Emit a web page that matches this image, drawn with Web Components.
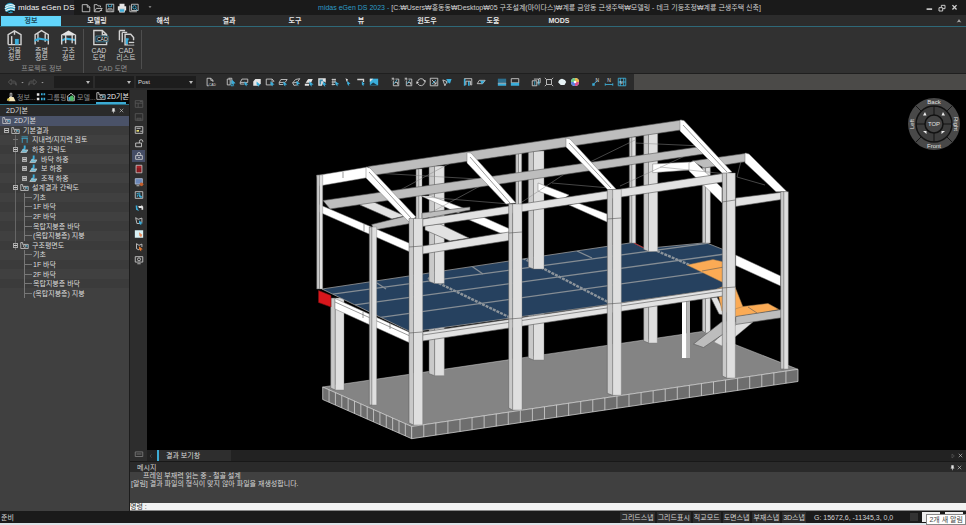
<!DOCTYPE html>
<html lang="ko">
<head>
<meta charset="utf-8">
<title>midas eGen DS 2023</title>
<style>
  html, body { margin: 0; height: 100%; background: #000; }
  body { font: 7px/9px "Liberation Sans", "Noto Sans CJK KR", sans-serif; color: #d4d4d4; }
</style>
</head>
<body>
<ds-app></ds-app>

<script>
{
  const BASE = `
    * { box-sizing: border-box; }
    button { font: inherit; color: inherit; background: none; border: 0; padding: 0; margin: 0; }
    ds-icon { flex: none; }
  `;

  class DsElement extends HTMLElement {
    constructor() {
      super();
      this.attachShadow({ mode: "open" });
    }

    attr(name, defaultValue) {
      return this.getAttribute(name) || defaultValue;
    }

    connectedCallback() {
      this.shadowRoot.innerHTML = `<style>${BASE}${this.styles}</style>${this.template}`;
    }
  }

  // w = white strokes, c = cyan strokes, cf = cyan fill, wf = white fill
  const ICONS = {
    logo: `<circle cx="6" cy="6" r="5.2" fill="#2a9fc4"/><path d="M1.2 4.5Q6 1 11 4M.8 7Q6 3 11.2 6M1.5 9Q6 5.5 10.8 8.2" stroke="#e8f4f8" stroke-width="1.2" fill="none"/><path d="M3 10.6Q7 7.5 10 9.6" stroke="#111" fill="none"/>`,
    new: `<path class="w" d="M1.5 2H7.5L10.5 5V10.5H1.5ZM7.5 2V5H10.5"/>`,
    open: `<path class="w" d="M9 5V3.5H6L5 2H1.5V10.5H8L11 6.5H4L2 10"/><path class="w" d="M8 9H11"/>`,
    save: `<path class="w" d="M1.5 1.5H10.5V10.5H1.5Z"/><path class="c" d="M4 1.5V4.5H8V1.5"/><path class="w" d="M3.5 10.5V7H8.5V10.5M5 8.5H7"/>`,
    print: `<path class="wf" d="M3 1H9V4H3ZM1 4H11V9H1Z"/><path class="cf" d="M3 7H9V11H3Z"/><path class="w" d="M3 7H9V11H3Z"/>`,
    preview: `<path class="w" d="M1 3V10.5H9.5M3 1.5H11V9H3Z"/><circle class="c" cx="6.5" cy="5.2" r="2"/><path class="c" d="M8 6.5L10 9"/>`,
    building: `<path class="w" d="M1.5 11V4L6 1.3L10.6 4V11H1.5M1.5 4V11M6 1.3V4"/><path class="cf" d="M6.3 7H9V11H6.3Z"/><path class="w" d="M4 5V11"/>`,
    floor: `<path class="w" d="M1.5 11V4L6 1.2L10.8 4V11M3.5 3V9M8.6 3.4V9"/><path class="cf" d="M1 7.6L4 6L11 7.2V8.4L4.5 7.6L1 9Z"/>`,
    struct: `<path class="wf" d="M.8 4L6 1L11.3 4L9 4.6H2.6Z"/><path class="cf" d="M1 7.5L4 6L11 7V8.5L4 7.5L1 9Z"/><path class="w" d="M1.2 11V4M4 10V4M8.6 10V4M10.9 11V4"/>`,
    cad: `<path class="w" d="M2 1H8L11 4V11H2ZM8 1V4H11"/><path d="M3.5 5H12V9H3.5Z" fill="#111" stroke="#5ac" stroke-width=".5"/><text x="4.2" y="8.4" font-size="3.6" fill="#eee">CAD</text>`,
    cadlist: `<path class="w" d="M1 1H5M1 1V8M3 2.4H6.5M3 2.4V9.4M5 3.7H9L11 6V11.2H5Z"/><path class="cf" d="M5.5 6.5H7.5V10.7H5.5Z"/><path d="M7 8H12V11H7Z" fill="#222"/><path class="w" d="M7.6 9.5H11.5"/>`,
    undo: `<path class="g" d="M4.5 2.5L1.5 5.5L4.5 8.5V6.5H8Q10 6.5 10 9M4.5 2.5V4.5H8Q10.5 5 10 9"/>`,
    redo: `<path class="g" d="M7.5 2.5L10.5 5.5L7.5 8.5V6.5H4Q2 6.5 2 9M7.5 2.5V4.5H4Q1.5 5 2 9"/>`,
    doc: `<path class="w" d="M2.5 10.5V1.5H7L9.5 4V6M7 1.5V4H9.5M2.5 10.5H4.5"/><text x="4.6" y="11" font-size="4" fill="#ddd">CAD</text>`,
    selbox: `<path class="w" d="M1.5 2.5H5V9.5H1.5ZM3 1.5H7V8"/><path class="c" d="M6 4.5V10.5H9"/><path class="cf" d="M7 3L11.5 7.5L9 8L10 11L7 8Z"/>`,
    selrect: `<path class="w" d="M3.5 2.5H10.5V6.5H1.5L3.5 2.5M1.5 6.5V8.5H6"/><path class="cf" d="M6.5 5.5L11 9L8.8 9.2L9.5 11.5L6.5 9Z"/>`,
    cube: `<path class="wf" d="M1.5 5.5L4 2.5H10.5V7.5L8 10.5H1.5Z"/><path class="cf" d="M5.5 5.5L10.5 9.5L8 9.8L8.5 12L5.5 9Z"/>`,
    wire: `<path class="w" d="M1.5 2.5H8.5V9.5H1.5ZM8.5 2.5L10.5 4.5V6"/><path class="cf" d="M6.5 5L11.5 9L9 9.3L9.5 11.5L6.5 9Z"/>`,
    plane: `<path class="w" d="M3.5 3H11L8.5 6.5H1.5ZM1.5 6.5V9H6"/><path class="cf" d="M6.5 5.5L11 9L8.8 9.4V11.5L6.5 9Z"/>`,
    tilt: `<path class="w" d="M2 7L5.5 3L10.5 2L7.5 6.5ZM2 7L3.5 10L8 9.5"/><path class="cf" d="M6.5 4.5L11 8L8.5 8.5L9 11L6.5 8.5Z"/>`,
    solid: `<path class="wf" d="M2 7L5 2.5H10.5L8.5 7ZM1 8H6V10.5H1Z"/><path class="cf" d="M6.5 5L11.5 9L9 9.3L9.5 11.8L6.5 9Z"/>`,
    page: `<path class="wf" d="M1.5 1.5H10.5V7L8 5L6 10.5H1.5Z"/><path d="M3 3H7V5H5V9H3Z" fill="#3d88a8"/><path class="cf" d="M7 5L11.5 9L9.4 9.4L10 12L7 9Z"/>`,
    grid: `<path class="w" d="M2 3H7M2 6H7M2 9H6M3.5 2V10M6 2V7"/><path class="cf" d="M6.5 5L11 8.5L8.8 9L9.3 11.3L6.5 9Z"/>`,
    node: `<path class="wf" d="M3 1.5L6 3L4.5 6Z"/><path class="cf" d="M5 4.5L9 8L7 8.5L7.5 11L5 8.5Z"/>`,
    corner: `<path class="w" stroke-width="1.6" d="M1.5 3H9V6"/><path class="cf" d="M7 5L10.5 8.5L9 9V11L7 9Z"/>`,
    screen: `<path class="cf" d="M1 2H11V10H1Z"/><path class="wf" d="M1 2H5L1 6Z"/><path d="M1.5 9.5L5 6.5L9.5 9.5" fill="#1b3947"/>`,
    zoomw: `<path class="w" d="M2 3.5L4 1.5M2 1.5H4.5V4M4 4.5V10.5H10.5V2.5H6.5"/><path class="c" d="M8.5 3.5L4.5 8.5"/><path class="w" d="M6 6.5H9V9"/>`,
    rotate: `<path class="w" d="M2 5.5A4.2 4.2 0 0 1 10 4.5M10.2 6.5A4.2 4.2 0 0 1 2.2 8"/><path class="wf" d="M8.5 4H11.5V7ZM.5 8.5V5.2L3.6 7Z"/>`,
    fit: `<path class="w" d="M1.5 1.5H10.5V10.5H1.5ZM3.5 3.5L8.5 8.5M8.5 5.5V8.5H5.5"/><path class="c" d="M8.5 3.5L3.5 8.5"/>`,
    pan: `<path class="w" d="M1 3.5L6 5.5L3.5 10.5Z"/><path class="cf" d="M5 2.5H11.5L9.5 8L8 6.5L6.5 8V5Z"/>`,
    frame: `<path class="cf" d="M1 2H3V10.5H1ZM6 5H8V10.5H6Z"/><path class="w" d="M1.5 2H10.5V9.5H9V5H3.5V9.5"/>`,
    sheet: `<path class="w" d="M1.5 8L4 4H11L8 8Z"/><path class="cf" d="M5 4.5H10.5L7 9Z"/>`,
    half: `<path d="M1 2H11V7H1Z" fill="#2d6f8e"/><path class="wf" d="M1 7H11V8H1Z"/><path class="cf" d="M1 8H11V10.5H1Z"/>`,
    halfb: `<path class="w" d="M1.5 2H10.5V7H1.5Z"/><path class="cf" d="M1 7H11V10.5H1Z"/>`,
    multi: `<path class="w" d="M1.5 4.5H7V10.5H1.5ZM3.5 2.5H9V8M9 2.5L11 1.5V7H7"/><path class="c" d="M4.5 5V10M9.5 4V10"/>`,
    square: `<path class="w" d="M3 3H9V9H3ZM1 1L3 3M11 1L9 3M1 11L3 9M11 11L9 9"/>`,
    blob: `<path d="M1.5 6.5Q2 3 6 2.2L9.5 3.5L11 6L9 9.5H4.5Z" fill="#e6f2f5"/>`,
    palette: `<circle cx="6" cy="6" r="4.8" fill="#eee"/><path d="M6 6L6 1.2A4.8 4.8 0 0 1 10.8 6Z" fill="#e9b949"/><path d="M6 6H10.8A4.8 4.8 0 0 1 6 10.8Z" fill="#d94f8c"/><path d="M6 6V10.8A4.8 4.8 0 0 1 1.2 6Z" fill="#5b7fe0"/><path d="M6 6H1.2A4.8 4.8 0 0 1 6 1.2Z" fill="#69c98b"/><circle cx="6" cy="6" r="1.6" fill="#fff"/>`,
    nodenum: `<path class="cf" d="M1.5 7.5H4.5V10.5H1.5Z"/><path class="c" d="M3.5 8L8 4.5"/><text x="5.5" y="5.5" font-size="6" fill="#ddd">N</text>`,
    elemnum: `<path class="c" d="M1.5 9H10.5M1.5 7.5V10.5M10.5 7.5V10.5"/><text x="4" y="6" font-size="6" fill="#ddd">N</text>`,
    gridnum: `<path class="c" d="M1.5 1.5H10.5V10.5H1.5ZM1.5 6H10.5M4 1.5V10.5M8 1.5V10.5"/><text x="3" y="8" font-size="5" fill="#ddd">N</text>`,
    tabInfo: `<path class="w" d="M5 1.5H7V5.5H5ZM5 5.5L1.5 10.5"/><path d="M4 6H9L11.5 11H3Z" fill="#f5e7bb"/><circle cx="3" cy="9" r="1.6" fill="#d8c14a"/>`,
    tabGroup: `<path class="wf" d="M1 1.5H4V4.5H1ZM1 7H4V10H1Z"/><path class="cf" d="M6 1.5H8V4H6ZM6 7H8V10H6ZM9 1.5H11V4H9ZM9 7H11V10H9Z"/>`,
    tabModel: `<path class="w" d="M1 5.5L6 1.5L11 5.5M2 5V10.5H10V5"/><path d="M5 5L8 4L10 8L8 11L4 9.5Z" fill="#4fb866"/><path class="cf" d="M3 6H5V10H3Z"/>`,
    drawing: `<path class="w" d="M1 2V10H11V4.5H3.5V2Z"/><circle class="w" cx="6.3" cy="6.8" r="1.7"/><path class="c" d="M7.5 6H9.5V8.5"/>`,
    table: `<path class="c" d="M2 2.5H10.5M2 4.5H10.5M3 4.5V10.5M9.5 4.5V10.5"/>`,
    load: `<path class="cf" d="M5 .8H7.5V5L4.5 8L2.5 5.8L5 4.5Z"/><path d="M1 10L3.5 6.5H10.5L8.5 10Z" fill="#70b7cf" stroke="#ddd" stroke-width=".8"/>`,
    dim1: `<path class="g" d="M1.5 2H10.5V10H1.5ZM1.5 5H10.5M5 5V10M7 3H10"/>`,
    dim2: `<path class="g" d="M1.5 2H10.5V10H1.5ZM3.5 7.5H8.5V9.5H3.5Z"/>`,
    panel: `<path class="w" d="M1.5 2H10.5V10H1.5Z"/><path d="M3 6H6V8H3Z" fill="#e6dd70"/><path class="w" d="M3 4H8M7.5 7.5H10"/>`,
    unlock: `<path class="w" d="M2 6H9V10.5H2ZM6.5 6V4Q6.5 2 8.5 2T10.5 4V5"/>`,
    lock: `<path class="w" d="M2 5.5H10V10H2ZM4 5.5V4Q4 1.8 6 1.8T8 4V5.5M5 7.8H7"/>`,
    red: `<path d="M2.5 1.5H9.5V10.5H2.5Z" fill="#a52126" stroke="#c9c9c9"/><path d="M4 5V10M6 5V10M8 5V10" stroke="#4b1114" stroke-width=".6"/>`,
    monitor: `<path d="M1.5 2H10V8.5H1.5Z" fill="#6b87b8" stroke="#b4c2d6"/><path class="w" d="M3 10.5H6.5"/><circle cx="9" cy="8.8" r="2.2" fill="#c25f2c"/>`,
    box3: `<path class="w" d="M1.5 2H10.5V10H1.5Z"/><path class="c" d="M3 4.5L7 3.5V6M4 8.5V6H6"/><path class="cf" d="M6 5L10 8L8.5 9.5L6 8Z"/>`,
    swap: `<path class="cf" d="M2 3H4V6L6 9.5L2.5 8Z"/><path class="wf" d="M5 3.5H9V2L11 4.5V8H9V6H6Z"/>`,
    poly: `<path class="w" d="M2 2L5 4L9.5 2.5V8M2 2L3.5 9H7"/><path class="cf" d="M6 5L10.5 8.8L8.5 9.2L8.8 11.2L6 9Z"/>`,
    light: `<path d="M1 1.5H11V10.5H1Z" fill="#d9f1f5"/><path d="M6 4L10 7L8.5 10L6.5 8Z" fill="#e88b5b"/>`,
    polyo: `<path class="w" d="M3 2V8L6 9.5M3 2L6 4L9.5 2.5V6"/><path d="M6 5L10.5 8.8L8.5 9.2L8.8 11.5L6 9Z" fill="#e3762c"/>`,
    display: `<path class="w" d="M1.5 2H10.5V8.5H1.5ZM4 10.5H8"/><circle class="w" cx="6" cy="5.2" r="1.8"/>`,
    keyboard: `<path d="M1.5 3.5H10.5V9H1.5ZM3 6H9" fill="none" stroke="#7d7d7d"/>`,
    pin: `<path class="wf" d="M4 2H8V6.5H9V7.5H3V6.5H4ZM5.5 7.5H6.5V10.5H5.5Z"/>`,
    close: `<path class="w" d="M3 3L9 9M9 3L3 9"/>`,
    closeBig: `<path class="w" stroke-width="2.2" d="M2.5 2L9.5 9.5M9.5 2L2.5 9.5"/>`,
    min: `<path class="wf" d="M1 7.5H10.5V10H1Z"/>`,
    restore: `<path class="w" stroke-width="1.4" d="M1.5 5.5H7V10.5H1.5ZM5 5V2H10.5V7H7.5"/>`,
    left: `<path class="g" d="M7 3.5L4.5 6L7 8.5"/>`,
    right: `<path class="g" d="M4.5 3L8 6L4.5 9Z"/>`,
    up: `<path class="w" d="M3.5 8L6 4L8.5 8M4.5 6.8H7.5"/>`,
    caret: `<path d="M3 4.5H9L6 8Z" fill="#9a9a9a"/>`,
  };

  class DsIcon extends DsElement {
    get styles() {
      const size = this.attr("size", "10");
      return `
        :host { display: block; width: ${size}px; height: ${size}px; }
        svg { display: block; width: 100%; height: 100%; overflow: visible; }
        .w { fill: none; stroke: #d2d2d2; }
        .c { fill: none; stroke: #3fb4de; }
        .g { fill: none; stroke: #585858; }
        .wf { fill: #e4e4e4; }
        .cf { fill: #3aaedb; }
      `;
    }

    get template() {
      return `<svg viewBox="0 0 12 12" aria-hidden="true">${ICONS[this.attr("name", "new")]}</svg>`;
    }
  }

  const iconButton = (name, label, size = 10) =>
    `<button aria-label="${label}"><ds-icon name="${name}" size="${size}"></ds-icon></button>`;

  class DsTitlebar extends DsElement {
    get styles() {
      return `
        :host { display: grid; grid-template-columns: auto 1fr auto; align-items: center; height: 15px; background: #1a1a1a; }
        .left, .window { display: flex; align-items: center; }
        .brand { display: flex; align-items: center; gap: 2px; height: 15px; padding-left: 4px; width: 74px; background: #242428; font: 8px/15px "Liberation Sans", sans-serif; color: #f2f2f2; white-space: nowrap; }
        .quick { display: flex; gap: 2px; margin-left: 7px; align-items: center; }
        .more { margin-left: 6px; }
        h1 { margin: 0; font: inherit; color: #d0d0d0; white-space: nowrap; text-align: center; }
        h1 span { color: #2e9cc7; }
        .window { justify-content: flex-end; gap: 5px; padding-right: 8px; }
      `;
    }

    get template() {
      return `
        <div class="left">
          <div class="brand"><ds-icon name="logo" size="12"></ds-icon>midas eGen DS</div>
          <div class="quick">
            ${iconButton("new", "새 파일")}${iconButton("open", "열기")}${iconButton("save", "저장")}
            ${iconButton("print", "인쇄")}${iconButton("preview", "미리보기")}
            <div class="more">${iconButton("caret", "더보기", 6)}</div>
          </div>
        </div>
        <h1><span>midas eGen DS 2023 -</span> [C:₩Users₩홍동동₩Desktop₩05 구조설계(마이다스)₩계룡 금암동 근생주택₩모델링 - 데크 기둥조정₩계룡 근생주택 신축]</h1>
        <div class="window">${iconButton("min", "최소화", 7)}${iconButton("restore", "복원", 8)}${iconButton("closeBig", "닫기", 7)}</div>
      `;
    }
  }

  class DsRibbon extends DsElement {
    get styles() {
      return `
        :host { display: block; background: #313131; }
        nav { display: flex; gap: 6px; height: 12px; padding: 1px 1px 0; border-bottom: 1px solid #2e6878; background: #2c2c2c; }
        nav button { width: 60px; font-weight: 700; color: #e6e6e6; line-height: 10px; }
        nav button.active { background: #62d5fb; color: #1c4a5b; }
        nav .fold { width: 10px; margin-left: auto; }
        .groups { display: flex; height: 46px; padding-top: 2px; }
        section { display: flex; flex-direction: column; justify-content: space-between; margin: 0; padding: 0 1px; }
        section.info { width: 83px; }
        section.cad { width: 58px; }
        section + section, .end { border-left: 1px solid #4e4e4e; }
        .end { height: 39px; margin-top: 1px; }
        .tools { display: flex; justify-content: center; }
        .tools button { display: flex; flex-direction: column; align-items: center; width: 27px; line-height: 7px; color: #cfcfcf; }
        .tools span { margin-top: 1px; white-space: nowrap; }
        h2 { margin: 0; font: inherit; text-align: center; color: #8f8f8f; }
      `;
    }

    tool(icon, top, bottom) {
      return `<button><ds-icon name="${icon}" size="17"></ds-icon><span>${top}<br>${bottom}</span></button>`;
    }

    get template() {
      const tabs = ["정보", "모델링", "해석", "결과", "도구", "뷰", "윈도우", "도움", "MODS"];
      return `
        <nav>
          ${tabs.map((t, i) => `<button class="${i ? "" : "active"}">${t}</button>`).join("")}
          <button class="fold" aria-label="리본 접기"><ds-icon name="up" size="8"></ds-icon></button>
        </nav>
        <div class="groups">
          <section class="info">
            <div class="tools">${this.tool("building", "건물", "정보")}${this.tool("floor", "층별", "정보")}${this.tool("struct", "구조", "정보")}</div>
            <h2>프로젝트 정보</h2>
          </section>
          <section class="cad">
            <div class="tools">${this.tool("cad", "CAD", "도면")}${this.tool("cadlist", "CAD", "리스트")}</div>
            <h2>CAD 도면</h2>
          </section>
          <div class="end"></div>
        </div>
      `;
    }
  }

  class DsToolbar extends DsElement {
    get styles() {
      return `
        :host { display: flex; height: 17px; background: #4b4a48; border-top: 1px solid #1f1f1f; }
        .bar { display: flex; align-items: center; width: 634px; padding-left: 7px; background: #2b2b2b; }
        .history { display: flex; align-items: center; gap: 2px; width: 47px; }
        .pick { position: relative; margin-right: 2px; }
        .pick::after { content: ""; position: absolute; right: 3px; top: 5px; border: 2px solid transparent; border-top: 3px solid #bbb; pointer-events: none; }
        select { display: block; appearance: none; width: 39px; height: 12px; padding: 0 2px; border: 0; border-radius: 0; background: #1d1d1d; color: #ddd; font: 6px/12px "Liberation Sans", sans-serif; }
        .wide select { width: 60px; }
        .icons { display: flex; gap: 3px; margin-left: 11px; }
        .wide + .icons { margin-left: 7px; }
      `;
    }

    group(names) {
      return `<div class="icons">${names.map((n) => iconButton(n, n)).join("")}</div>`;
    }

    get template() {
      return `
        <div class="bar">
          <div class="history">
            ${iconButton("undo", "실행 취소", 11)}${iconButton("caret", "취소 목록", 5)}
            ${iconButton("redo", "다시 실행", 11)}${iconButton("caret", "다시 실행 목록", 5)}
          </div>
          <div class="pick"><select aria-label="층"><option></option></select></div>
          <div class="pick"><select aria-label="그룹"><option></option></select></div>
          <div class="pick wide"><select aria-label="단계"><option>Post</option></select></div>
          ${this.group(["doc"])}
          ${this.group(["selbox", "selrect", "cube", "wire", "plane", "tilt", "solid", "page", "grid", "node", "corner", "screen"])}
          ${this.group(["zoomw", "zoomw", "rotate", "fit", "pan"])}
          ${this.group(["frame", "sheet"])}
          ${this.group(["half", "halfb"])}
          ${this.group(["multi", "square", "blob", "palette"])}
          ${this.group(["nodenum", "elemnum", "gridnum"])}
        </div>
      `;
    }
  }

  // [depth, icon, label, expander]
  const TREE = [
    [0, "drawing", "2D기본", ""],
    [1, "drawing", "기본결과", "-"],
    [2, "table", "지내력/지지력 검토", ""],
    [2, "load", "하중 간략도", "-"],
    [3, "load", "바닥 하중", "+"],
    [3, "load", "보 하중", "+"],
    [3, "load", "조적 하중", "+"],
    [2, "drawing", "설계결과 간략도", "-"],
    [3, "", "기초", ""],
    [3, "", "1F 바닥", ""],
    [3, "", "2F 바닥", ""],
    [3, "", "옥탑지붕층 바닥", ""],
    [3, "", "(옥탑지붕층) 지붕", ""],
    [2, "drawing", "구조평면도", "-"],
    [3, "", "기초", ""],
    [3, "", "1F 바닥", ""],
    [3, "", "2F 바닥", ""],
    [3, "", "옥탑지붕층 바닥", ""],
    [3, "", "(옥탑지붕층) 지붕", ""],
  ];

  class DsTreePanel extends DsElement {
    get styles() {
      return `
        :host { display: flex; flex-direction: column; background: #404040; border-right: 1px solid #1c1c1c; }
        nav { display: flex; height: 15px; padding-left: 6px; background: #070707; border-bottom: 1px solid #2b7086; }
        nav button { display: flex; align-items: center; gap: 1px; width: 30px; color: #8d8d8d; white-space: nowrap; }
        nav button.active { color: #eee; border-bottom: 2px solid #3cabd4; }
        header { display: flex; align-items: center; height: 11px; padding: 0 4px 0 6px; background: #2a2a2a; color: #ddd; }
        header span { flex: 1; }
        header button { margin-left: 1px; }
        ul { display: grid; grid-auto-rows: 1fr; height: 182px; margin: 0; padding: 0; list-style: none; }
        li { display: flex; align-items: center; line-height: 9px; color: #dcdcdc; white-space: nowrap; }
        li:nth-child(even) { background-color: #3b3b3b; }
        li:first-child { background-color: #4a5268; }
        li ds-icon { margin-right: 3px; }
        .d0 { padding-left: 2px; }
        .d1 { padding-left: 4px; }
        .d2 { padding-left: 13px; }
        .d3 { padding-left: 22px; }
        .exp { display: grid; place-items: center; width: 5px; height: 5px; margin-right: 2px; border: 1px solid #aaa; }
        .exp::before { content: ""; width: 3px; height: 1px; background: #ccc; }
        .plus { background: #777; }
        .leaf::before { content: ""; align-self: stretch; width: 7px; margin: 0 1px 0 2px; border-left: 1px solid #777; background: linear-gradient(#777, #777) 0 50% / 100% 1px no-repeat; }
        .line::before { content: ""; width: 5px; height: 1px; margin-right: 2px; background: #777; }
        .d2, .d3 { background-image: linear-gradient(#666, #666); background-size: 1px 100%; background-position: 15px 0; background-repeat: no-repeat; }
        li.last { background-image: none; }
      `;
    }

    row([depth, icon, label, exp], i) {
      const cls = [`d${depth}`];
      if (!icon) cls.push("leaf");
      if (icon === "table") cls.push("line");
      if (i > 13) cls.push("last");
      const box = exp ? `<span class="exp ${exp === "+" ? "plus" : ""}"></span>` : "";
      const glyph = icon ? `<ds-icon name="${icon}" size="9"></ds-icon>` : "";
      return `<li class="${cls.join(" ")}">${box}${glyph}${label}</li>`;
    }

    get template() {
      return `
        <nav>
          <button><ds-icon name="tabInfo"></ds-icon>정보...</button>
          <button><ds-icon name="tabGroup"></ds-icon>그룹핑</button>
          <button><ds-icon name="tabModel"></ds-icon>모델...</button>
          <button class="active"><ds-icon name="drawing"></ds-icon>2D기본</button>
        </nav>
        <header><span>2D기본</span>${iconButton("pin", "고정", 7)}${iconButton("close", "닫기", 7)}</header>
        <ul>${TREE.map((r, i) => this.row(r, i)).join("")}</ul>
      `;
    }
  }

  class DsSideTools extends DsElement {
    get styles() {
      return `
        :host { display: flex; flex-direction: column; align-items: center; gap: 1px; padding: 8px 0 1px; background: #2d2d2d; }
        button { display: grid; place-items: center; width: 13px; height: 12px; }
        button:nth-of-type(5) { background: #454d66; }
        button:last-of-type { margin-top: auto; }
      `;
    }

    get template() {
      return ["dim1", "dim2", "panel", "unlock", "lock", "red", "monitor", "box3", "swap", "poly", "light", "polyo", "display", "keyboard"]
        .map((n) => iconButton(n, n)).join("");
    }
  }

  const lerp = (a, b, t) => [a[0] + (b[0] - a[0]) * t, a[1] + (b[1] - a[1]) * t];
  const poly = (cls, points) => `<polygon class="${cls}" points="${points}"/>`;
  const line = (cls, a, b) => `<line class="${cls}" x1="${a[0]}" y1="${a[1]}" x2="${b[0]}" y2="${b[1]}"/>`;

  // H section column: narrow flange on the left, wide face on the right
  const column = (x0, xm, x1, y0, y1, drop = 2) =>
    poly("mid", `${x0},${y0} ${xm},${y0} ${xm},${y1} ${x0},${y1 - drop}`) +
    poly("face", `${xm},${y0} ${x1},${y0} ${x1},${y1} ${xm},${y1}`);

  class DsModelView extends DsElement {
    get styles() {
      return `
        :host { display: block; position: relative; min-height: 0; overflow: hidden; background: #000; }
        svg { display: block; width: 100%; height: 100%; }
        .face { fill: #dfdfdf; stroke: #777; stroke-width: .4; }
        .mid { fill: #c9c9c9; stroke: #555; stroke-width: .5; }
        .beam { fill: #e2e2e2; stroke: #555; stroke-width: .6; }
        .gray { fill: #bdbdbd; stroke: #555; stroke-width: .6; }
        .white { fill: #fff; stroke: #777; stroke-width: .5; }
        .slab { fill: #848484; stroke: #d0d0d0; stroke-width: .5; }
        .side { fill: #6e6e6e; stroke: #ddd; stroke-width: .7; }
        .tick { stroke: #e0e0e0; stroke-width: .7; }
        .deck { fill: #26415f; stroke: #9a9a9a; stroke-width: .8; }
        .joint { stroke: #858d94; stroke-width: 1.3; }
        .girder { stroke: #8c949b; stroke-width: 2.4; stroke-dasharray: 3 1; }
        .seam { stroke: #555; stroke-width: .6; }
        .brace { stroke: #8b8b8b; stroke-width: .5; }
        .orange { fill: #fbab55; stroke: #9d7a52; stroke-width: .5; }
        .red { fill: #d8161c; stroke: #7c1013; stroke-width: .6; }
        ds-compass { position: absolute; top: 7px; right: 5px; }
      `;
    }

    get foundation() {
      const left = [322.7, 386], front = [411.7, 425.5], right = [798, 368.3];
      let out = poly("slab", "322.7,386 411.7,425.5 798,368.3 702,330.5");
      out += poly("side", "322.7,386 411.7,425.5 411.7,437.7 322.7,398.5");
      out += poly("side", "411.7,425.5 798,368.3 798,380.5 411.7,437.7");
      for (let i = 1; i < 14; i++) {
        const p = lerp(left, front, i / 14);
        out += line("tick", p, [p[0], p[1] + 12.3]);
      }
      for (let i = 1; i < 32; i++) {
        const p = lerp(front, right, i / 32);
        out += line("tick", p, [p[0], p[1] + 12.2]);
      }
      return out;
    }

    get deck() {
      const outline = "322,288 633,241.5 645,247.5 706,241.7 727,250 727,287 411,331";
      let out = `<clipPath id="deck"><polygon points="${outline}"/></clipPath>` + poly("deck", outline) + `<g clip-path="url(#deck)">`;
      for (const t of [0.12, 0.37, 0.66]) {
        out += line("joint", lerp([322, 288], [411, 331], t), lerp([707, 236], [799, 276], t));
      }
      out += line("girder", [428, 277], [511, 317]) + line("girder", [523, 257], [610, 302]) + line("girder", [657, 250], [727, 280]);
      out += line("joint", [377, 282], [386, 288]) + line("joint", [470, 264], [483, 273]) + line("joint", [577, 250], [592, 257]);
      return out + `</g><path d="M634 242L644 247" stroke="#b3272b"/>`;
    }

    get template() {
      return `
        <svg viewBox="147 89 819 360" role="img" aria-label="3D 구조 모델">
          ${this.foundation}

          ${column(330.7, 335.3, 344, 297, 389)}
          ${column(429, 434.7, 444.3, 325, 374.7)}
          ${column(528.3, 533.5, 544, 312, 359)}
          ${column(643.7, 648.7, 657.3, 298, 342)}
          ${column(702.3, 705.5, 710.3, 290, 332)}
          <rect x="682" y="295" width="4.5" height="62" fill="#fff"/><rect x="686.5" y="295" width="3.5" height="62" fill="#b5b5b5"/>

          ${poly("face", "714,341 735,321 753,321 735,336 722,345")}
          ${poly("beam", "711,297 717,296 723,308 723,314 719,313")}
          ${poly("gray", "693.5,343 721.5,321 735,319 735,325 703.5,346.5")}
          ${poly("white", "735.7,254 780.7,275 780.7,285 735.7,264.5")}

          ${this.deck}

          ${column(416, 419, 422, 168, 272, 0)}
          ${column(429, 434.5, 444.3, 165, 282.5)}
          ${column(515.7, 518.5, 521.7, 152, 204, 0)}
          ${column(528.3, 533.5, 544, 150, 268)}
          ${column(629.3, 632, 635.7, 136, 242, 0)}
          ${column(643.7, 648.5, 657.7, 132, 250.5)}
          ${column(702.3, 705.5, 710.3, 166, 242, 0)}

          ${poly("orange", "687,264 713,258.5 724,261 724,282")}
          ${line("seam", [702, 270], [724, 266])}
          ${poly("orange", "717,288 724,285 735,286 743,306 736,314 722,310")}
          ${poly("orange", "735,308 743,305.5 768,302.5 779,308.5 760,312 735,316")}
          ${line("seam", [748, 306], [757, 312])}
          ${poly("gray", "735.7,315.5 783,308.3 783,316.5 735.7,323.5")}

          ${poly("white", "421,195 431,195 466,208 458,212")}
          ${poly("white", "538,182 569,194 562,199 538,190")}
          ${poly("white", "569,204 578,202 607,213 607,221")}
          ${poly("white", "483,216 512,229 512,233 500,232 467,218")}
          ${poly("beam", "425,224.5 440,223 469,237 450,240 425,229")}
          ${poly("beam", "360,197 367,198 405,215 392,218 360,204")}
          ${poly("gray", "371.7,223.5 410,214 410,222.5 374,229")}
          ${poly("gray", "422,212 470,206 470,209 422,218")}
          ${poly("white", "652.7,163 690,161 690,169 652.7,171.7")}
          ${poly("gray", "692,160 746.7,152.3 746.7,160.5 704,167")}
          ${poly("white", "689,161.5 694,160 722,187 722,202 689,170")}
          ${poly("white", "745,152 749,153 787,190.7 776,190.7 745,161.7")}
          ${poly("beam", "735.7,197 781.7,191.3 781.7,198.5 735.7,205.5")}

          ${line("brace", [391, 194], [467, 153])}
          ${line("brace", [375, 172], [512, 180])}
          ${line("brace", [430, 212], [495, 177])}
          ${line("brace", [425, 196], [510, 203])}
          ${line("brace", [522, 201], [566, 172])}
          ${line("brace", [552, 182], [610, 187])}
          ${line("brace", [590, 161], [635, 139])}
          ${line("brace", [635, 142], [702, 145])}
          ${line("brace", [620, 185], [700, 148])}
          ${line("brace", [737, 176], [765, 184])}
          ${line("brace", [741, 160], [737, 176])}
          ${line("brace", [660, 166], [727, 173])}

          ${poly("gray", "323,199.5 705,145 705,152.8 330,208")}
          ${poly("gray", "368,165.5 682,119 684,128.5 375,174")}
          ${poly("white", "316.7,174.5 368,166 368,176.5 319,185")}
          ${line("seam", [343, 171], [343, 177])}

          ${poly("white", "366,166 370,167 416,216 409,221 366,177")}
          ${line("seam", [369, 171], [411, 217])}
          ${poly("white", "467,151.5 471,152 516,202 506,203 467,162")}
          ${line("seam", [470, 156], [510, 202])}
          ${poly("white", "566,137 570,138 616,188 608,189 566,146")}
          ${line("seam", [569, 142], [611, 187])}
          ${poly("white", "680,119 684,119.5 732,171 723,173 680,130")}
          ${line("seam", [683, 124], [727, 171])}

          ${poly("white", "318,203 410,242.5 410,251 318,210.5")}
          ${line("seam", [364, 223], [364, 230])}
          ${poly("beam", "422.7,218 723,172.5 723,181 422.7,225.5")}
          ${poly("beam", "422.7,245 509,231 509,239.5 422.7,253")}

          ${poly("red", "318.5,289.5 331,294.5 331,306 318.5,301.5")}
          ${poly("white", "335,297.5 410,331.5 410,342 335,308")}
          ${line("seam", [335, 301], [410, 335])}
          ${line("seam", [363, 311], [363, 317])}${line("seam", [390, 322], [390, 328])}
          ${poly("beam", "422.7,331 723,287 723,295 422.7,340")}
          ${line("seam", [422.7, 334], [723, 290])}

          ${column(316.7, 319.5, 322.7, 174, 288, 0)}
          ${column(369.3, 372, 376.7, 226, 404, 0)}
          ${column(409, 413.5, 422.7, 217.5, 424)}
          ${line("seam", [409, 246], [422, 245])}${line("seam", [409, 332], [422, 331])}
          ${column(508.7, 512.7, 522, 203, 409)}
          ${line("seam", [509, 232], [522, 231])}${line("seam", [509, 318], [522, 317])}
          ${column(607.3, 612.7, 621.3, 188.5, 394.3)}
          ${line("seam", [607, 218], [621, 217])}${line("seam", [607, 303], [621, 302])}
          ${column(722.3, 726.7, 735.3, 172, 377)}
          ${line("seam", [722, 201], [735, 199])}${line("seam", [722, 287], [735, 286])}
          ${column(780.7, 784, 788.3, 190.7, 368, 0)}
        </svg>
        <ds-compass></ds-compass>
      `;
    }
  }

  class DsCompass extends DsElement {
    get styles() {
      return `
        :host { display: block; width: 54px; height: 54px; }
        svg { display: block; }
        text { fill: #e0e0e0; font-size: 6px; text-anchor: middle; }
      `;
    }

    get template() {
      return `
        <svg width="54" height="54" viewBox="-27 -27 54 54" role="img" aria-label="View">
          <circle r="26" fill="#484848"/>
          <path d="M-19 -19L-12 -12M19 -19L12 -12M-19 19L-12 12M19 19L12 12" stroke="#161616"/>
          <circle r="18" fill="#3d3d3d" stroke="#121212" stroke-width="1.5"/>
          <path d="M0 -18V18M-18 0H18" stroke="#121212"/>
          <circle r="9" fill="#444" stroke="#121212" stroke-width="1.5"/>
          <path d="M-11 -8.5L-7.5 -8.5L-9 -12ZM11 -8.5L7.5 -8.5L9 -12ZM-11 7L-7.5 10L-7.5 7ZM11 7L7.5 10L7.5 7Z" fill="#eee"/>
          <text y="-20">Back</text>
          <text y="24">Front</text>
          <text y="2" font-size="5">TOP</text>
          <text transform="rotate(-90)" y="-20">Left</text>
          <text transform="rotate(90)" y="-20">Right</text>
        </svg>
      `;
    }
  }

  class DsMessages extends DsElement {
    get styles() {
      return `
        :host { display: block; background: #404040; }
        header { display: flex; align-items: center; height: 11px; padding: 0 3px 0 7px; background: #2a2a2a; border-top: 1px solid #181818; }
        header span { flex: 1; }
        pre { height: 31px; margin: 0; padding: 0 1px; font: inherit; line-height: 8px; color: #d6d6d6; }
        pre p { margin: 0; }
        pre p:first-child { padding-left: 12px; }
        .command { display: flex; height: 8px; background: #f2f2f2; color: #333; border-bottom: 1px solid #888; line-height: 7px; }
        input { flex: 1; min-width: 0; height: 7px; padding: 0 2px; border: 0; outline: 0; background: none; font: inherit; }
      `;
    }

    get template() {
      return `
        <header><span>메시지</span>${iconButton("pin", "고정", 7)}${iconButton("close", "닫기", 7)}</header>
        <pre><p>프레임 부재력 읽는 중 - 철골 설계</p><p>[알림] 결과 파일의 형식이 맞지 않아 파일을 재생성합니다.</p></pre>
        <div class="command"><label for="cmd">명령 :</label><input id="cmd" type="text"></div>
      `;
    }
  }

  class DsStatusbar extends DsElement {
    get styles() {
      return `
        :host { display: flex; position: relative; align-items: center; height: 14px; padding: 0 3px 0 1px; background: #1a1a1a; border-bottom: 2px solid #dde3e8; white-space: nowrap; }
        .ready { flex: 1; }
        .modes { display: flex; gap: 2px; }
        .modes button { height: 11px; padding: 0 1px; background: #2c2c2c; }
        .coord { width: 104px; padding-left: 8px; }
        .slot { width: 8px; height: 8px; background: #333; margin-right: 4px; }
        .box { width: 18px; height: 10px; margin-right: 5px; background: #eee; }
        .box + .box { margin-right: 0; }
        .tip { position: absolute; right: 0; bottom: -2px; padding: 0 2px; border: 1px solid #888; background: #fff; color: #444; }
      `;
    }

    get template() {
      const modes = ["그리드스냅", "그리드표시", "직교모드", "도면스냅", "부재스냅", "3D스냅"];
      return `
        <span class="ready">준비</span>
        <div class="modes">${modes.map((m) => `<button>${m}</button>`).join("")}</div>
        <span class="coord">G: 15672,6, -11345,3, 0,0</span>
        <div class="slot"></div><div class="box"></div><div class="box"></div>
        <div class="tip" role="tooltip">2개 새 알림</div>
      `;
    }
  }

  class DsApp extends DsElement {
    get styles() {
      return `
        :host { display: flex; flex-direction: column; height: 100vh; overflow: hidden; cursor: default; }
        main { display: grid; grid-template-columns: 130px 17px 1fr; grid-template-rows: 1fr auto auto; flex: 1; min-height: 0; }
        ds-tree-panel { grid-row: 1 / 4; }
        ds-side-tools { grid-row: 1 / 3; }
        .docs { display: flex; align-items: center; height: 11px; padding-right: 2px; background: #222; }
        .docs button { display: block; }
        .docs .tab { width: 74px; height: 11px; padding-left: 7px; border-left: 2px solid #3cabd4; background: #2e2e2e; text-align: left; color: #ddd; margin-right: auto; margin-left: 2px; }
        ds-messages { grid-column: 2 / 4; }
      `;
    }

    get template() {
      return `
        <ds-titlebar></ds-titlebar>
        <ds-ribbon></ds-ribbon>
        <ds-toolbar></ds-toolbar>
        <main>
          <ds-tree-panel></ds-tree-panel>
          <ds-side-tools></ds-side-tools>
          <ds-model-view></ds-model-view>
          <div class="docs">
            ${iconButton("left", "이전", 8)}
            <button class="tab">결과 보기창</button>
            ${iconButton("right", "다음", 8)}${iconButton("close", "닫기", 7)}
          </div>
          <ds-messages></ds-messages>
        </main>
        <ds-statusbar></ds-statusbar>
      `;
    }
  }

  customElements.define("ds-icon", DsIcon);
  customElements.define("ds-titlebar", DsTitlebar);
  customElements.define("ds-ribbon", DsRibbon);
  customElements.define("ds-toolbar", DsToolbar);
  customElements.define("ds-tree-panel", DsTreePanel);
  customElements.define("ds-side-tools", DsSideTools);
  customElements.define("ds-compass", DsCompass);
  customElements.define("ds-model-view", DsModelView);
  customElements.define("ds-messages", DsMessages);
  customElements.define("ds-statusbar", DsStatusbar);
  customElements.define("ds-app", DsApp);
}
</script>
</body>
</html>
